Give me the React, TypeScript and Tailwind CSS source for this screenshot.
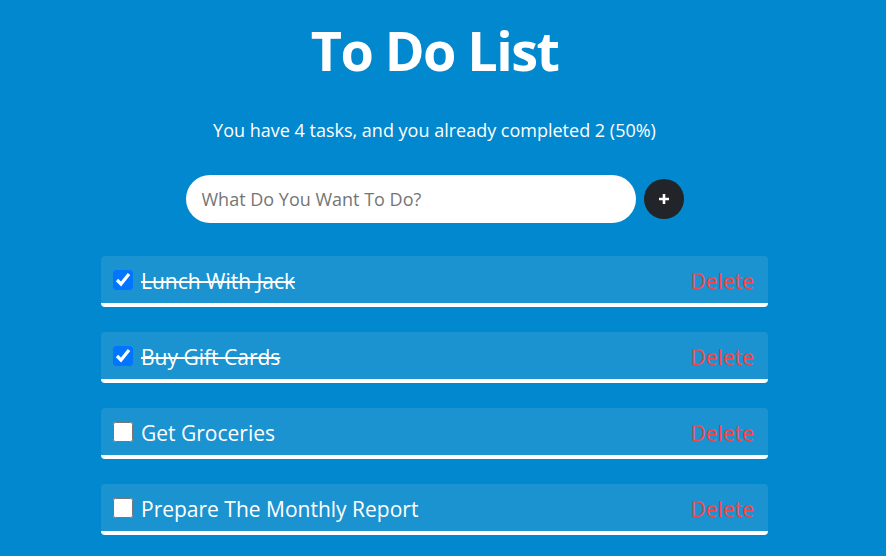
import React, { useState } from 'react';

type Task = { id: number; text: string; done: boolean };

const initialTasks: Task[] = [
  { id: 1, text: 'Lunch With Jack', done: true },
  { id: 2, text: 'Buy Gift Cards', done: true },
  { id: 3, text: 'Get Groceries', done: false },
  { id: 4, text: 'Prepare The Monthly Report', done: false },
];

export default function App() {
  const [tasks, setTasks] = useState<Task[]>(initialTasks);
  const [value, setValue] = useState('');

  const completed = tasks.filter(t => t.done).length;
  const percent = tasks.length ? Math.round((completed / tasks.length) * 100) : 0;

  const toggle = (id: number) =>
    setTasks(tasks.map(t => (t.id === id ? { ...t, done: !t.done } : t)));

  const remove = (id: number) => setTasks(tasks.filter(t => t.id !== id));

  const add = () => {
    if (!value.trim()) return;
    setTasks([...tasks, { id: Date.now(), text: value.trim(), done: false }]);
    setValue('');
  };

  return (
    <div className="min-h-screen bg-[#0288ce] text-white font-['Open_Sans',sans-serif] pr-[17px]">
      <div className="flex flex-col items-center pt-[18px] pb-[40px]">
        {/* Header */}
        <h1 className="text-[54px] font-bold leading-[64px] tracking-[-1.6px]">To Do List</h1>
        <p className="mt-[36px] text-[18px] leading-[24px]">
          You have {tasks.length} tasks, and you already completed {completed} ({percent}%)
        </p>

        {/* New task */}
        <div className="mt-[33px] flex items-center gap-[8px]">
          <input
            value={value}
            onChange={e => setValue(e.target.value)}
            onKeyDown={e => e.key === 'Enter' && add()}
            placeholder="What Do You Want To Do?"
            className="w-[450px] h-[48px] rounded-full bg-white px-[16px] text-[18px] text-gray-800 placeholder:text-[#757575] outline-none"
          />
          <button
            onClick={add}
            className="w-[40px] h-[40px] rounded-full bg-[#212529] flex items-center justify-center"
          >
            <svg width="12" height="12" viewBox="0 0 12 12">
              <path d="M6 1v10M1 6h10" stroke="white" strokeWidth="2.6" />
            </svg>
          </button>
        </div>

        {/* Tasks */}
        <ul className="mt-[33px] w-[667px] flex flex-col gap-[25px]">
          {tasks.map(task => (
            <li
              key={task.id}
              className="h-[51px] flex items-center px-[12px] pt-[2px] rounded-[4px] bg-[#1b93d0] border-b-[4px] border-white"
            >
              <input
                type="checkbox"
                checked={task.done}
                onChange={() => toggle(task.id)}
                className="w-[20px] h-[20px] m-0 -mt-[2px]"
              />
              <span className={`ml-[8px] text-[21px] leading-[28px] ${task.done ? 'line-through' : ''}`}>
                {task.text}
              </span>
              <button
                onClick={() => remove(task.id)}
                className="ml-auto mr-[2px] text-[21px] leading-[28px] text-[#ff4141]"
              >
                Delete
              </button>
            </li>
          ))}
        </ul>
      </div>
    </div>
  );
}
